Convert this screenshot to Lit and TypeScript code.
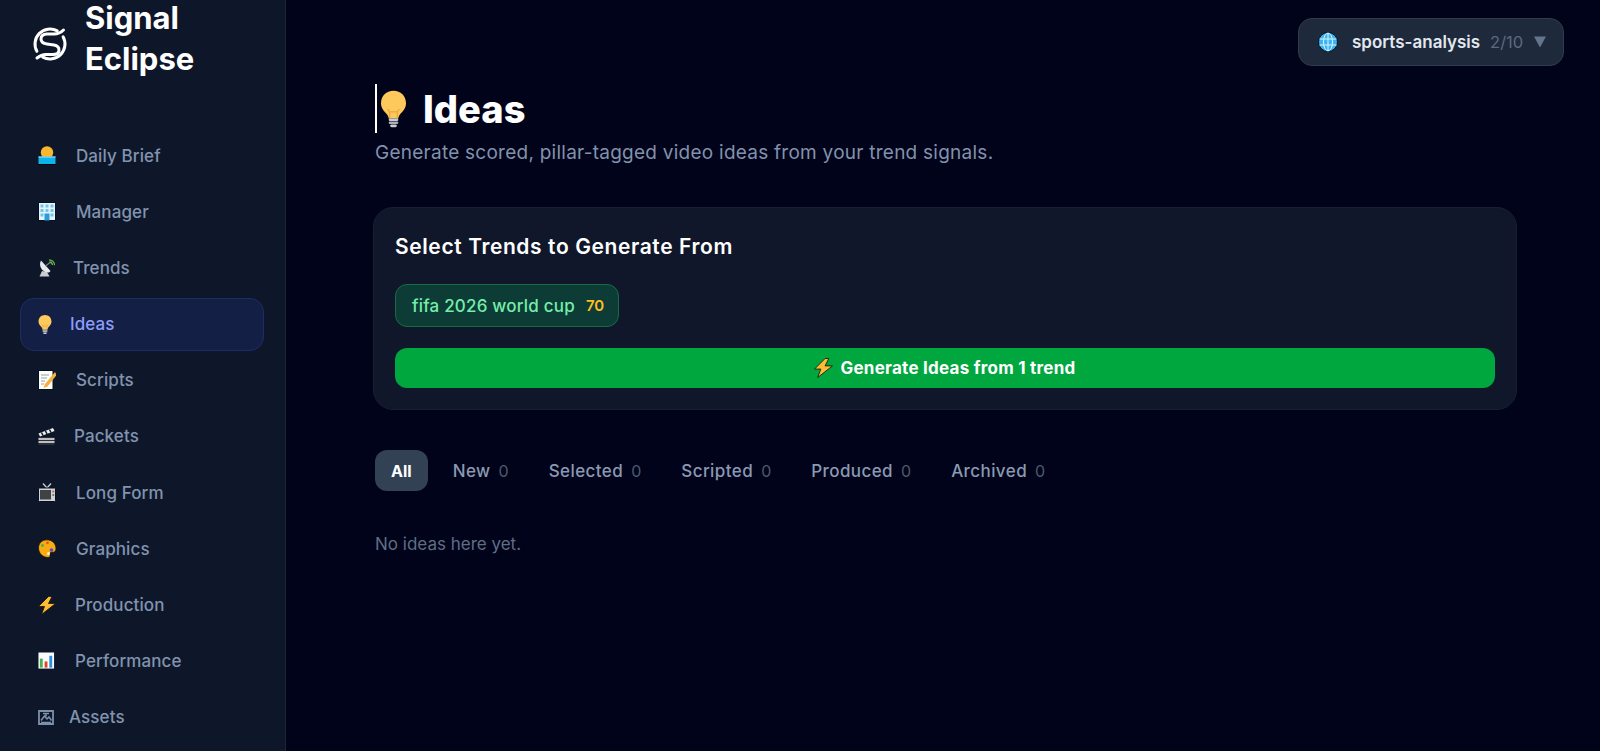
import { LitElement, html, css, svg } from "lit";
import { customElement } from "lit/decorators.js";

const I = (w: number, h: number, body: unknown, vb = "0 0 18 19") =>
  html`<svg width=${w} height=${h} viewBox=${vb} aria-hidden="true">${body}</svg>`;

const bulb = (w: number, h: number) =>
  I(w, h, svg`
    <path d="M13 0C5.5 0 0 5.5 0 13c0 6 4 8.5 6.5 12 1 1.6 1.5 3 1.5 4h10c0-1 .5-2.400 1.500-4C22 21.500 26 19 26 13 26 5.500 20.500 0 13 0Z" fill="#fec95c"/>
    <path d="M9 29v-7l-2-3M17 29v-7l2-3M9 22h8" fill="none" stroke="#eda83a" stroke-width="1.400"/>
    <rect x="8" y="29" width="10" height="2.600" rx="1.300" fill="#c9cdd2"/>
    <rect x="8" y="32" width="10" height="2.600" rx="1.300" fill="#aab0b7"/>
    <rect x="9.500" y="35" width="7" height="3" rx="1.500" fill="#c9cdd2"/>`, "0 0 26 38");

const boltSvg = (w: number, h: number) =>
  I(w, h, svg`<path d="M10.500 .5 .5 10.500h6L3.500 18.500l14-11h-7L14 .5Z" fill="#fcbc35" stroke="#1a1407" stroke-width=".8" stroke-linejoin="round"/>`, "0 0 18 19");

const ICONS: Record<string, unknown> = {
  "Daily Brief": I(18, 19, svg`
    <circle cx="9" cy="6.500" r="6.200" fill="#f9b72e"/>
    <rect x=".5" y="10.500" width="17" height="7.500" fill="#0db4e9"/>
    <rect x=".5" y="10.500" width="17" height="1" fill="#a8e4f5"/>
    <rect x="0" y="18" width="18" height="1" fill="#02060f"/>`),
  Manager: I(18, 19, svg`
    <rect x=".5" y=".5" width="17" height="18" fill="#e3f4fb" stroke="#04101f" stroke-width="1"/>
    <g fill="#74c4ea">
      <rect x="2.500" y="2.500" width="3" height="3"/><rect x="7.500" y="2.500" width="3" height="3"/><rect x="12.500" y="2.500" width="3" height="3"/>
      <rect x="2.500" y="7" width="3" height="3"/><rect x="7.500" y="7" width="3" height="3"/><rect x="12.500" y="7" width="3" height="3"/>
      <rect x="2.500" y="11.500" width="3" height="3"/><rect x="12.500" y="11.500" width="3" height="3"/>
    </g>
    <rect x="6.500" y="11.500" width="5" height="7" fill="#2a9bdc"/>`),
  Trends: I(17, 18, svg`
    <path d="M4 12 1.500 17.500h10L9 13Z" fill="#c9ccd0"/>
    <path d="M3 1.500C.5 6 3 12.500 9.500 13.500c1.500.2 2.500-.5 3-1.500Z" fill="#e8eaec"/>
    <path d="M7.500 7 12 3.500" stroke="#7b828a" stroke-width="1.200"/>
    <path d="M11 .8c3 .2 5.300 2.200 5.600 5.400M11.500 3c1.600.2 2.800 1.200 3 3" fill="none" stroke="#64b33f" stroke-width="1.300"/>`, "0 0 17 18"),
  Ideas: bulb(14, 19),
  Scripts: I(18, 20, svg`
    <rect x=".5" y=".5" width="14.500" height="19" fill="#fbfbf8" stroke="#04101f" stroke-width="1"/>
    <path d="M3 5h8M3 8h6M3 11h4M3 14h3" stroke="#9aa3ac" stroke-width="1"/>
    <path d="M17 2 7 14 5.500 18l4-1.500L18.500 5Z" fill="#f4b03f"/>`, "0 0 18 20"),
  Packets: I(17, 18, svg`
    <path d="M.5 6.500 15 1l1.500 3L2 9.500Z" fill="#eef0f2"/>
    <path d="M3.500 5.500 5 8.500M7.500 4l1.500 3M11.500 2.500 13 5.500" stroke="#15181c" stroke-width="1.500"/>
    <rect x=".5" y="10" width="16" height="8" fill="#2b2f35"/>
    <path d="M.5 12h16M.5 15h16" stroke="#eef0f2" stroke-width="1.300"/>`, "0 0 17 18"),
  "Long Form": I(18, 19, svg`
    <path d="M5 .5l4 4.500 4-4.500" fill="none" stroke="#c8ccd0" stroke-width="1.300"/>
    <rect x=".5" y="5" width="17" height="13.500" rx="1" fill="#d0d3d6" stroke="#04101f" stroke-width="1"/>
    <rect x="2" y="7" width="11" height="9.500" fill="#3f4348"/>
    <circle cx="15.300" cy="8.500" r="1.100" fill="#e0553f"/><circle cx="15.300" cy="12" r="1.100" fill="#6b7077"/>`),
  Graphics: I(18, 19, svg`
    <path d="M9 .8C4 .8 .5 4.300.5 9c0 5.500 4.500 9.500 9.500 9.500 2 0 2.500-1.400 2-2.500-.7-1.500.3-2.800 2-2.800h1.500C17 13.200 18 11.500 18 9.500 18 4.500 14 .8 9 .8Z" fill="#f8ac12" stroke="#1b1303" stroke-width=".8"/>
    <circle cx="9.500" cy="3.800" r="1.400" fill="#e8502d"/>
    <circle cx="4.500" cy="6.500" r="1.400" fill="#42b549"/>
    <circle cx="13.500" cy="11" r="1.800" fill="#5a49d8"/>
    <circle cx="10.500" cy="14.500" r="1.500" fill="#fff6d8"/>`),
  Production: boltSvg(18, 19),
  Performance: I(17, 18, svg`
    <rect x=".5" y=".5" width="16.500" height="17" fill="#fbfcfc"/>
    <rect x="2" y="7" width="3" height="9.500" fill="#3fb54a"/>
    <rect x="7" y="10" width="3" height="6.500" fill="#e8402d"/>
    <rect x="12" y="4" width="3" height="12.500" fill="#2d8fe0"/>`),
  Assets: I(16, 15, svg`
    <path d="M1 1h14v13H1Z" fill="none" stroke="#7d8fa9" stroke-width="1.800"/>
    <path d="M3 10.500 6.500 6 9 9l2-2 2.500 3.500M3 12.500h10M5 3.500h6M8 3.500v3" fill="none" stroke="#7d8fa9" stroke-width="1.500"/>`, "0 0 16 15"),
};

const NAV: [string, number][] = [
  ["Daily Brief", 38], ["Manager", 38], ["Trends", 35], ["Ideas", 32], ["Scripts", 38], ["Packets", 36],
  ["Long Form", 38], ["Graphics", 38], ["Production", 37], ["Performance", 37], ["Assets", 31],
];
const TABS = ["New", "Selected", "Scripted", "Produced", "Archived"];

@customElement("app-root")
export class AppRoot extends LitElement {
  static styles = css`
    :host { display: flex; height: 751px; overflow: hidden; background: #01031a; font-family: Inter, "Noto Sans", sans-serif; color: #fff; }
    svg { display: block; flex: none; }
    .side { width: 286px; flex: none; background: #0e172a; border-right: 1px solid #1b2537; box-sizing: border-box; overflow: hidden; }
    .brand { display: flex; align-items: center; gap: 17px; padding-left: 32px; height: 76px; }
    .logo { margin-top: 11px; }
    .brand-name { font-size: 31px; font-weight: 700; line-height: 41px; width: 125px; }
    .nav { display: flex; flex-direction: column; gap: 3.2px; padding: 53px 21px 0 20px; }
    .item { display: flex; align-items: center; height: 53px; box-sizing: border-box; flex: none; padding: 0 17px; border: 1px solid transparent; border-radius: 14px; font-size: 17px; font-weight: 500; letter-spacing: .1px; color: #8193ae; }
    .item.on { background: #141f45; border-color: #1f2c63; color: #8d9dfb; }
    .ico { flex: none; }
    .main { flex: 1; padding: 84px 83px 0 89px; position: relative; min-width: 0; }
    .pill { position: absolute; top: 18px; right: 36px; width: 266px; height: 48px; box-sizing: border-box; display: flex; align-items: center; padding: 0 17px 0 19px; background: #1e293b; border: 1px solid #2f3c50; border-radius: 14px; font-size: 17px; font-weight: 600; color: #e2e8f0; white-space: nowrap; }
    .pill .name { margin-left: 14px; }
    .pill .count { margin-left: 10px; font-size: 16.500px; font-weight: 400; color: #5c6a80; }
    .pill .caret { margin-left: auto; }
    h1 { margin: 0; display: flex; align-items: center; gap: 17px; height: 49px; padding-left: 4px; font-size: 38px; font-weight: 800; border-left: 2px solid #fff; }
    .sub { margin: 6px 0 0; font-size: 19px; letter-spacing: .25px; color: #8192ac; line-height: 28px; }
    .card { margin: 40px 0 0 -2px; height: 203px; box-sizing: border-box; padding: 25px 21px; background: #10172a; border: 1px solid #171f33; border-radius: 20px; }
    h2 { margin: 0; font-size: 21px; font-weight: 600; letter-spacing: .6px; line-height: 28px; }
    .chip { display: flex; width: 224px; align-items: center; gap: 11px; margin-top: 23px; height: 43px; box-sizing: border-box; padding: 0 16px; background: #0d3b36; border: 1px solid #166d44; border-radius: 12px; font-size: 17px; font-weight: 500; letter-spacing: .2px; color: #74eeaa; white-space: nowrap; }
    .chip b { color: #fbbf24; font-weight: 600; font-size: 15px; letter-spacing: 0; }
    .go { margin-top: 21px; height: 40px; display: flex; align-items: center; justify-content: center; gap: 7px; background: #00a63e; border-radius: 12px; font-size: 17px; font-weight: 700; letter-spacing: .25px; }
    .tabs { display: flex; gap: 8px; margin-top: 40px; }
    .tab { height: 41px; display: flex; align-items: center; gap: 8px; padding: 0 16px; border-radius: 12px; font-size: 17px; font-weight: 500; letter-spacing: .42px; color: #8a9ab2; }
    .tab.on { background: #334155; color: #fff; font-size: 16px; font-weight: 700; letter-spacing: 0; margin-right: 1px; }
    .tab i { font-style: normal; font-size: 16px; letter-spacing: 0; color: #4d5a6f; font-weight: 400; }
    .empty { margin-top: 41px; font-size: 17px; line-height: 24px; color: #5f6e85; }
  `;
  render() {
    return html`
      <aside class="side">
        <div class="brand">
          <svg class="logo" width="36" height="36" viewBox="0 0 36 36" fill="none" stroke="#fff" stroke-width="3" stroke-linecap="round">
            <path d="M25.300 4.900A15 15 0 0 0 4.900 25.300M10.700 31.100A15 15 0 0 0 31.100 10.700"/>
            <path d="M31.500 4C29 6.500 27 8 22 8h-7c-4 0-6 2-6 5s2 4.500 6 5l7 1c3 .5 5 2.500 5 5 0 3-2.500 4.500-6 4.500h-7c-4 0-6 1-9 3.500"/>
          </svg>
          <div class="brand-name">Signal Eclipse</div>
        </div>
        <nav class="nav">
          ${NAV.map(([t, w]) => html`<div class="item ${t === "Ideas" ? "on" : ""}"><span class="ico" style="width:${w}px">${ICONS[t]}</span><span>${t}</span></div>`)}
        </nav>
      </aside>
      <main class="main">
        <div class="pill">
          <svg width="20" height="20" viewBox="0 0 20 20" fill="none"><circle cx="10" cy="10" r="9.500" fill="#3ab6f1" stroke="#04101f"/><g stroke="#d9f2fd" stroke-width="1"><ellipse cx="10" cy="10" rx="4.500" ry="9"/><path d="M10 1v18M1.500 7h17M1.500 13h17"/></g></svg>
          <span class="name">sports-analysis</span>
          <span class="count">2/10</span>
          <svg class="caret" width="12" height="12" viewBox="0 0 12 12"><path d="M0 .5h12L6 11.500Z" fill="#64748b"/></svg>
        </div>
        <h1>${bulb(25, 38)}<span>Ideas</span></h1>
        <p class="sub">Generate scored, pillar-tagged video ideas from your trend signals.</p>
        <section class="card">
          <h2>Select Trends to Generate From</h2>
          <div class="chip"><span>fifa 2026 world cup</span><b>70</b></div>
          <div class="go">${boltSvg(19, 20)}<span>Generate Ideas from 1 trend</span></div>
        </section>
        <div class="tabs">
          <div class="tab on">All</div>
          ${TABS.map((t) => html`<div class="tab"><span>${t}</span><i>0</i></div>`)}
        </div>
        <div class="empty">No ideas here yet.</div>
      </main>
    `;
  }
}
